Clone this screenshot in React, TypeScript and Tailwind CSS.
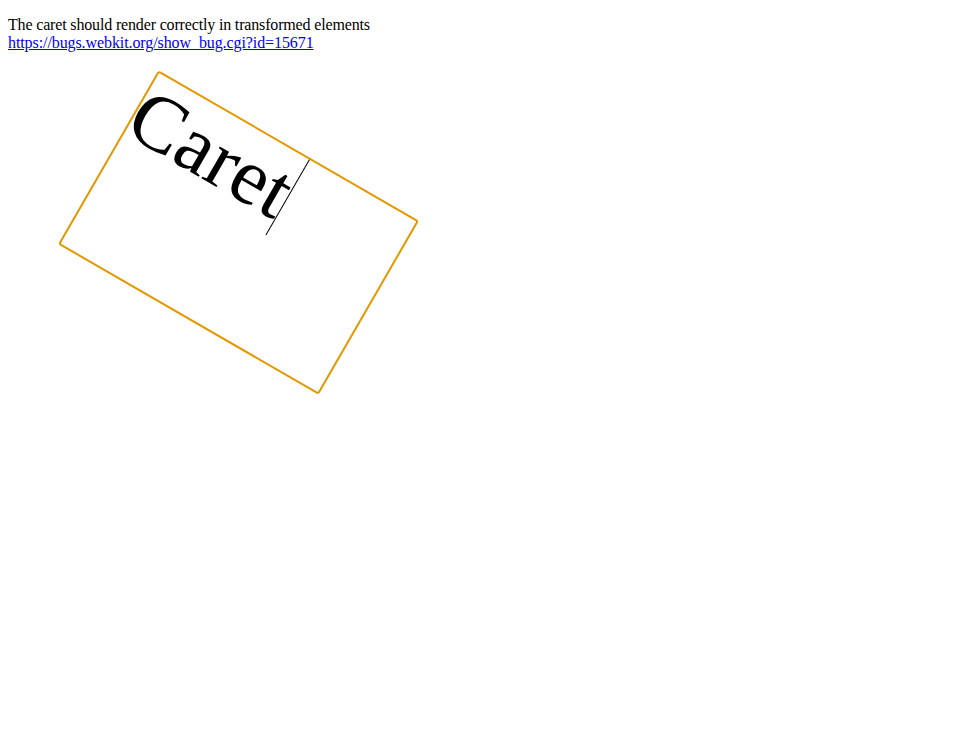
export default function App() {
  return (
    <div className="min-h-screen bg-white px-2 pt-4 text-black font-['Liberation_Serif','Times_New_Roman',serif] text-base leading-[1.15]">
      <div className="tracking-[-0.16px]">The caret should render correctly in transformed elements</div>
      <a href="#" className="text-[#0000ee] underline tracking-[-0.09px]">
        https://bugs.webkit.org/show_bug.cgi?id=15671
      </a>
      <div className="ml-[80px] mt-[79px] w-[301px] h-[201px] rotate-30 outline-2 -outline-offset-2 outline-[#e59700] rounded-[3px] text-[80px] leading-[normal] whitespace-nowrap">
        <span className="tracking-[0.4px]">Caret</span>
        <span className="inline-block w-px h-[89px] bg-black align-top" />
      </div>
    </div>
  );
}
